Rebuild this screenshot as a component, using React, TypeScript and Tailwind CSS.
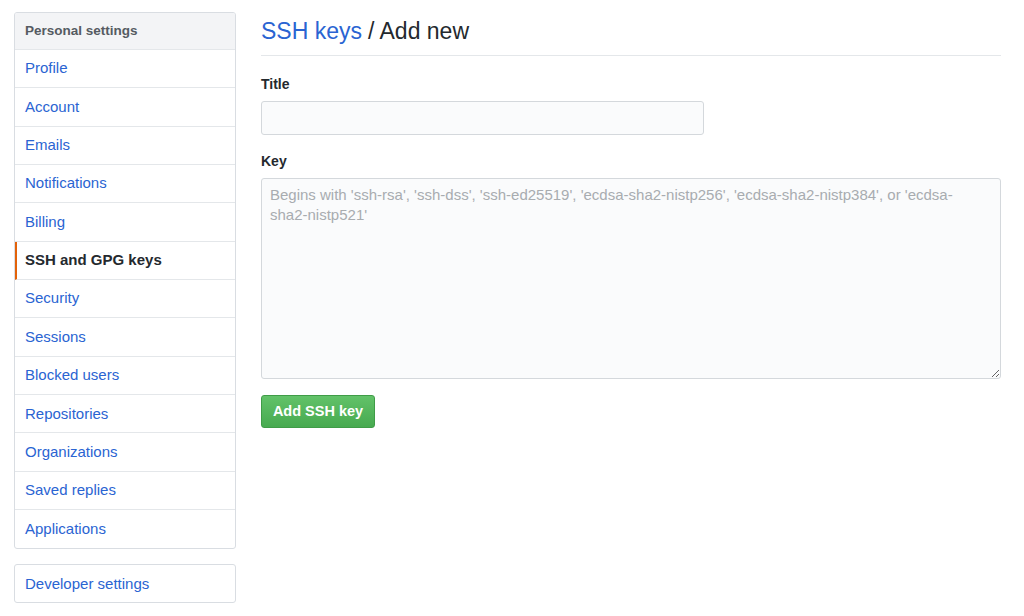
import React from 'react';

const navItems = [
  'Profile',
  'Account',
  'Emails',
  'Notifications',
  'Billing',
  'SSH and GPG keys',
  'Security',
  'Sessions',
  'Blocked users',
  'Repositories',
  'Organizations',
  'Saved replies',
  'Applications',
];

const ACTIVE = 'SSH and GPG keys';

function SettingsNav() {
  return (
    <nav className="w-[222px] shrink-0">
      <div className="rounded-[3px] border border-[#d9dde2] bg-white overflow-hidden">
        <div className="h-[37px] flex items-center px-[10px] bg-[#f3f4f6] border-b border-[#e4e7ea] text-[13.5px] font-bold text-[#555b62]">
          Personal settings
        </div>
        {navItems.map((label, i) => {
          const active = label === ACTIVE;
          const isLast = i === navItems.length - 1;
          return (
            <div
              key={label}
              className={`
                h-[38.35px] flex items-center text-[15px]
                ${isLast ? '' : 'border-b border-[#e4e7ea]'}
                ${active
                  ? 'border-l-2 border-l-[#e36209] pl-[8px] font-bold text-[#24292e]'
                  : 'pl-[10px] text-[#2a64d2]'}
              `}
            >
              {label}
            </div>
          );
        })}
      </div>

      <div className="mt-[15px] rounded-[3px] border border-[#d9dde2] bg-white h-[39px] flex items-center px-[10px] text-[15px] text-[#2a64d2]">
        Developer settings
      </div>
    </nav>
  );
}

function AddKeyForm() {
  return (
    <main className="flex-1 min-w-0">
      <div className="h-[44px] pt-[4px] border-b border-[#e4e7ea] text-[23px] leading-[30px] text-[#24292e]">
        <span className="text-[#2a64d2]">SSH keys</span>
        <span className="ml-[6px]">/ Add new</span>
      </div>

      <label className="block mt-[18px] text-[14px] font-bold text-[#24292e]">Title</label>
      <input
        type="text"
        className="mt-[6px] block w-[443px] h-[34px] rounded-[3px] border border-[#d4d8dc] bg-[#fafbfc] px-[8px] text-[14px] outline-none"
      />

      <label className="block mt-[16px] text-[14px] font-bold text-[#24292e]">Key</label>
      <textarea
        className="mt-[6px] block w-full h-[201px] rounded-[3px] border border-[#d4d8dc] bg-[#fafbfc] pl-[8px] pr-[14px] py-[6px] text-[15px] leading-[20px] text-[#24292e] placeholder:text-[#a8acb0] outline-none"
        placeholder="Begins with 'ssh-rsa', 'ssh-dss', 'ssh-ed25519', 'ecdsa-sha2-nistp256', 'ecdsa-sha2-nistp384', or 'ecdsa-sha2-nistp521'"
      />

      <button
        type="button"
        className="mt-[16px] h-[33px] w-[114px] rounded-[3px] border border-[#3f9c47] bg-gradient-to-b from-[#62c269] to-[#47aa50] text-[14.5px] font-bold text-white"
      >
        Add SSH key
      </button>
    </main>
  );
}

export default function App() {
  return (
    <div
      className="min-h-[616px] bg-white"
      style={{ fontFamily: '"Liberation Sans", Arial, sans-serif' }}
    >
      <div className="flex gap-[25px] pl-[14px] pr-[23px] pt-[12px]">
        <SettingsNav />
        <AddKeyForm />
      </div>
    </div>
  );
}
